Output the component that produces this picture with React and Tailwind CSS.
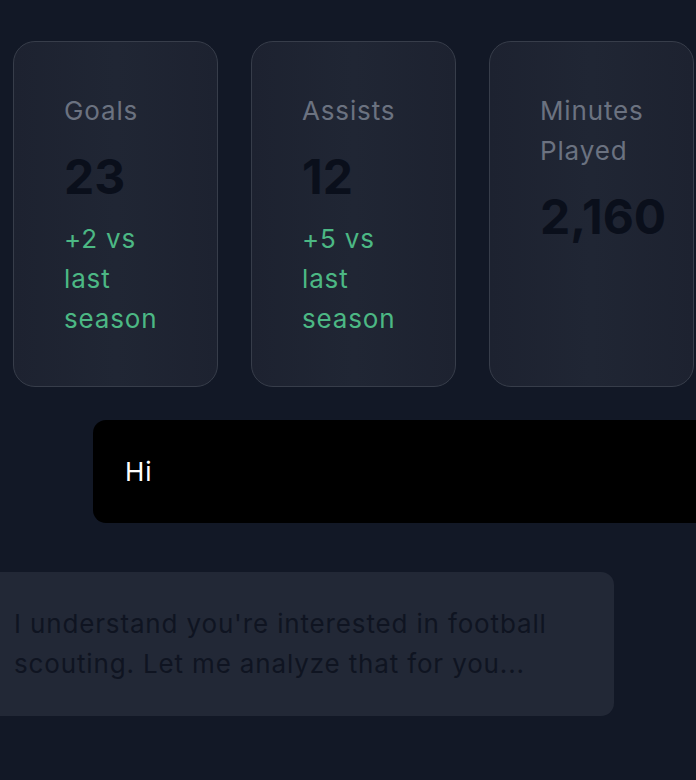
export default function App() {
  const stats = [
    { label: 'Goals', value: '23', change: '+2 vs last season' },
    { label: 'Assists', value: '12', change: '+5 vs last season' },
    { label: 'Minutes Played', value: '2,160' },
  ];

  return (
    <div className="min-h-screen w-full overflow-hidden bg-[#121826] font-['Inter',sans-serif]">
      {/* Stat cards */}
      <div className="grid grid-cols-3 gap-[33px] pl-[13px] pt-[41px] w-[694px]">
        {stats.map((s) => (
          <div
            key={s.label}
            className="rounded-[22px] border border-[#373d4a] bg-gradient-to-r from-[#1d2230] via-[#202634] to-[#1d2230] pl-[50px] pr-[40px] pt-[49px] pb-[48px] h-[346px]"
          >
            <div className="text-[26px] leading-[40px] tracking-[0.85px] text-[#6b7280]">{s.label}</div>
            <div className="mt-[17px] text-[48px] leading-[58px] font-bold text-[#0a0f1b]">{s.value}</div>
            {s.change && (
              <div className="mt-[13px] text-[26px] leading-[40px] tracking-[0.85px] text-[#4cb884]">{s.change}</div>
            )}
          </div>
        ))}
      </div>

      {/* User message */}
      <div className="mt-[33px] ml-[93px] w-[660px] rounded-[13px] bg-black px-[32px] py-[32px]">
        <p className="text-[26px] leading-[39px] tracking-[0.85px] text-white">Hi</p>
      </div>

      {/* Assistant message */}
      <div className="mt-[49px] ml-[-18px] w-[632px] rounded-[13px] bg-[#222836] px-[32px] py-[32px]">
        <p className="text-[26px] leading-[40px] tracking-[0.85px] text-[#0f1421]">
          I understand you're interested in football scouting. Let me analyze that for you...
        </p>
      </div>
    </div>
  );
}
